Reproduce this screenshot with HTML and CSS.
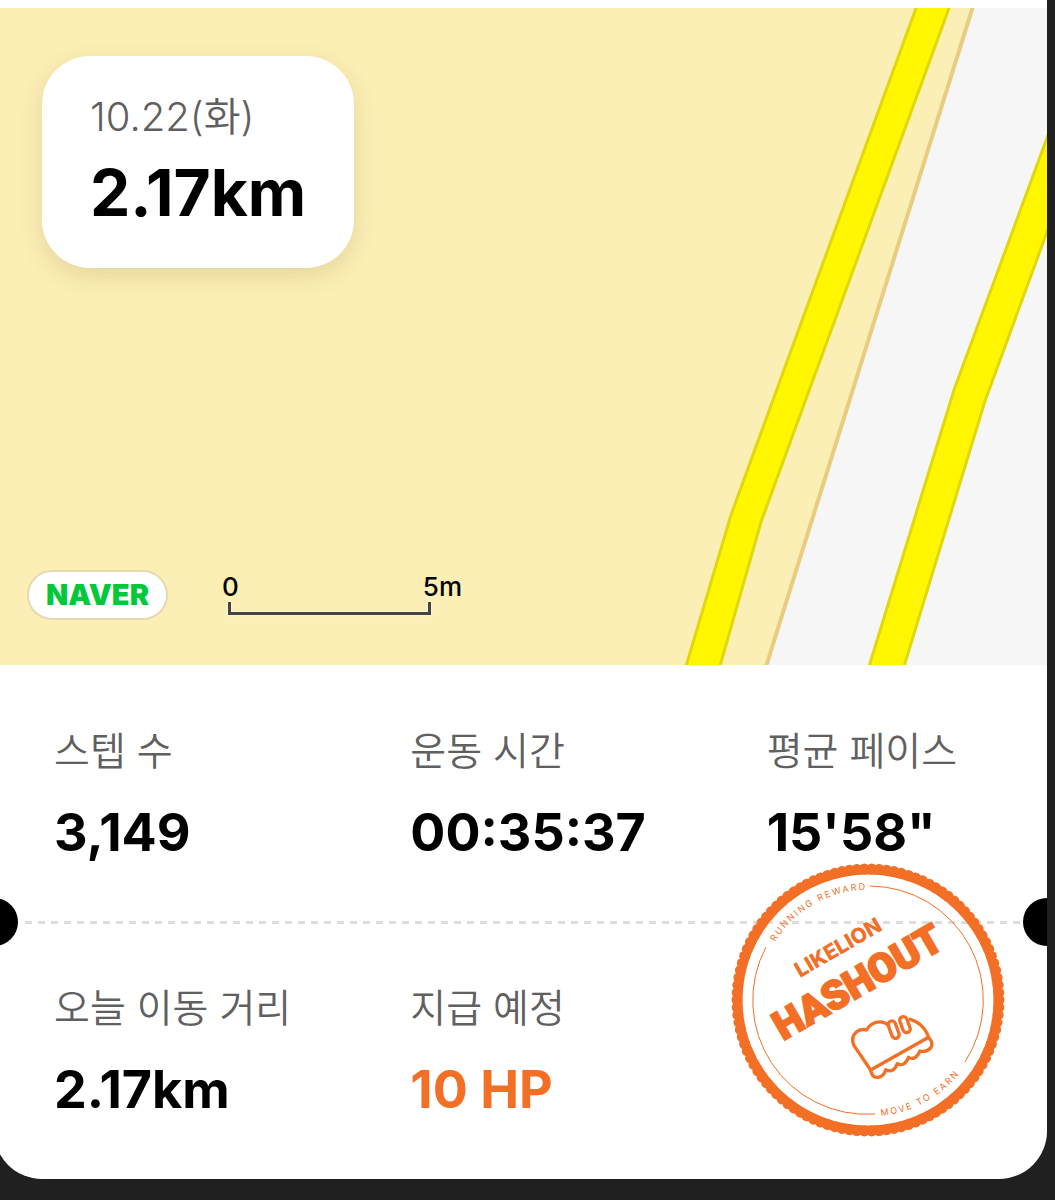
FILE: index.html
```html
<!DOCTYPE html>
<html lang="ko">
<head>
  <meta charset="utf-8">
  <meta name="viewport" content="width=device-width, initial-scale=1">
  <title>10.22(화) 2.17km</title>
  <link rel="stylesheet" href="styles.css">
</head>
<body>
  <main class="ticket">
    <section class="map">
      <svg class="map-canvas" viewBox="0 0 1053 657" preserveAspectRatio="xMaxYMin slice" aria-hidden="true">
        <rect class="land" width="1053" height="657"/>
        <path class="road" d="M979 0 L773 657 H1053 V0 Z"/>
        <path class="land-edge" d="M981 -8 L770 665"/>
        <path class="lane" d="M925 -8 L737 507 L690 665 H724 L767 514 L958 -8 Z"/>
        <path class="lane" d="M1064 100 L960 382 L873 665 H908 L991 393 L1064 194 Z"/>
      </svg>
      <div class="summary">
        <p class="summary-date">10.22(화)</p>
        <p class="summary-distance">2.17km</p>
      </div>
      <div class="map-footer">
        <a class="provider" href="#">NAVER</a>
        <div class="scale">
          <div class="scale-labels"><span>0</span><span>5m</span></div>
          <div class="scale-bar"></div>
        </div>
      </div>
    </section>

    <dl class="stats">
      <div class="stat"><dt>스텝 수</dt><dd>3,149</dd></div>
      <div class="stat"><dt>운동 시간</dt><dd>00:35:37</dd></div>
      <div class="stat"><dt>평균 페이스</dt><dd>15'58"</dd></div>
    </dl>
    <div class="tear"><span class="notch"></span><span class="dashes"></span><span class="notch notch-end"></span></div>
    <dl class="stats">
      <div class="stat"><dt>오늘 이동 거리</dt><dd>2.17km</dd></div>
      <div class="stat"><dt>지급 예정</dt><dd class="reward">10 HP</dd></div>
    </dl>

    <svg class="stamp" viewBox="0 0 274 274" role="img" aria-label="LIKELION HASHOUT">
      <defs>
        <path id="arc-top" d="M44 79 A110 110 0 0 1 160 29"/>
        <path id="arc-bottom" d="M150 253 A117 117 0 0 0 242 190"/>
      </defs>
      <circle class="stamp-ring" cx="137" cy="137" r="130"/>
      <circle class="stamp-teeth" cx="137" cy="137" r="131" pathLength="110"/>
      <path class="stamp-line" d="M139 23 A114 114 0 0 1 234 199"/>
      <path class="stamp-line" d="M144 251 A114 114 0 0 1 35 84"/>
      <text class="stamp-motto"><textPath href="#arc-top">RUNNING REWARD</textPath></text>
      <text class="stamp-motto"><textPath href="#arc-bottom">MOVE TO EARN</textPath></text>
      <text class="stamp-brand" transform="translate(69 115) rotate(-30)">LIKELION</text>
      <text class="stamp-name" transform="translate(52 178) rotate(-30)">HASHOUT</text>
      <g class="stamp-shoe" transform="scale(.3333) translate(-33 -39)">
        <path d="M452 660 L402 587 Q391 562 409 546 Q422 535 440 540 Q455 514 484 516 Q496 517 505 526"/>
        <path d="M571 508 Q605 518 621 550 L626 562 L452 660"/>
        <path d="M452 660 Q456 685 475 682 Q492 680 497 659 Q520 672 532 641 Q553 652 566 622 Q586 634 600 603 Q618 608 632 594 Q642 580 626 562"/>
        <rect x="-11" y="-27" width="22" height="54" rx="11" transform="translate(521 539) rotate(-20)"/>
        <rect x="-11" y="-25" width="22" height="50" rx="11" transform="translate(555 524) rotate(-20)"/>
      </g>
    </svg>
  </main>
</body>
</html>
```
FILE: styles.css
```css
* {
  box-sizing: border-box;
}

body {
  margin: 0;
  min-height: 100vh;
  overflow-x: hidden;
  background: #202020;
  color: #000;
  font-family: Inter, "Noto Sans CJK KR", sans-serif;
}

p,
dl,
dd {
  margin: 0;
}

.ticket {
  position: relative;
  margin: 0 8px 21px -6px;
  padding-top: 8px;
  overflow: hidden;
  background: #fff;
  border-radius: 0 0 48px 48px;
}

/* Map */

.map {
  position: relative;
  display: flex;
  flex-direction: column;
  align-items: flex-start;
  justify-content: space-between;
  min-height: 657px;
  padding: 48px 33px 45px;
  background: #fcefb5;
}

.map-canvas {
  position: absolute;
  inset: 0;
  width: 100%;
  height: 100%;
}

.land {
  fill: #fcefb5;
}

.road {
  fill: #f6f6f7;
}

.land-edge {
  fill: none;
  stroke: #e8cd80;
  stroke-width: 4;
}

.lane {
  fill: #fff600;
  stroke: #dfd80c;
  stroke-width: 3;
}

.summary {
  position: relative;
  margin-left: 15px;
  padding: 32px 48px 28px;
  background: #fff;
  border-radius: 48px;
  box-shadow: 0 8px 24px rgba(80, 60, 0, 0.14);
}

.summary-date {
  color: #606060;
  font-size: 40px;
  font-weight: 350;
  line-height: 58px;
}

.summary-distance {
  font-size: 64px;
  font-weight: 700;
  line-height: 94px;
}

.map-footer {
  position: relative;
  display: flex;
  align-items: center;
  gap: 54px;
}

.provider {
  padding: 0 17px;
  border: 2px solid #e6d9b2;
  border-radius: 25px;
  background: #fff;
  color: #03c83c;
  font-size: 29px;
  font-weight: 900;
  line-height: 46px;
  text-decoration: none;
}

.scale {
  width: 240px;
  padding-bottom: 4px;
  font-size: 26px;
  font-weight: 500;
  line-height: 30px;
}

.scale-labels {
  display: flex;
  justify-content: space-between;
}

.scale-bar {
  width: 203px;
  height: 13px;
  margin-left: 6px;
  border: 3px solid #444;
  border-top: 0;
  filter: drop-shadow(0 0 1px #fff);
}

/* Stats */

.stats {
  display: grid;
  grid-template-columns: repeat(3, minmax(0, 1fr));
  column-gap: 100px;
  padding: 56px 24px 57px 60px;
  white-space: nowrap;
}

.stat {
  display: grid;
  gap: 20px;
}

.stat dt {
  color: #606060;
  font-size: 39px;
  font-weight: 350;
  line-height: 60px;
}

.stat dd {
  font-size: 52px;
  font-weight: 700;
  line-height: 64px;
}

.stat .reward {
  color: #f36f26;
}

/* Perforated divider */

.tear {
  display: flex;
  align-items: center;
  height: 48px;
  margin: -24px 0;
}

.notch {
  width: 24px;
  height: 48px;
  border-radius: 0 24px 24px 0;
  background: #000;
}

.notch-end {
  border-radius: 24px 0 0 24px;
}

.dashes {
  flex: 1;
  height: 3px;
  margin: 0 0 0 7px;
  background: repeating-linear-gradient(90deg, #ddd 0 7px, transparent 7px 13px);
}

/* Stamp */

.stamp {
  position: absolute;
  right: 42px;
  bottom: 42px;
  width: 274px;
  height: 274px;
  font-family: Inter, sans-serif;
}

.stamp-ring,
.stamp-teeth,
.stamp-line,
.stamp-shoe {
  fill: none;
  stroke: #f36f26;
}

.stamp-ring {
  stroke-width: 9;
}

.stamp-teeth {
  stroke-width: 11;
  stroke-linecap: round;
  stroke-dasharray: 0 1;
}

.stamp-line {
  stroke-width: 1;
}

.stamp-shoe {
  stroke-width: 10;
  stroke-linecap: round;
  stroke-linejoin: round;
}

.stamp-motto,
.stamp-brand,
.stamp-name {
  fill: #f36f26;
}

.stamp-motto {
  font-size: 9px;
  letter-spacing: 2px;
}

.stamp-brand {
  font-size: 21px;
  font-weight: 800;
}

.stamp-name {
  font-family: Roboto, sans-serif;
  font-size: 40px;
  font-weight: 900;
  stroke: #f36f26;
  stroke-width: 2;
}
```
